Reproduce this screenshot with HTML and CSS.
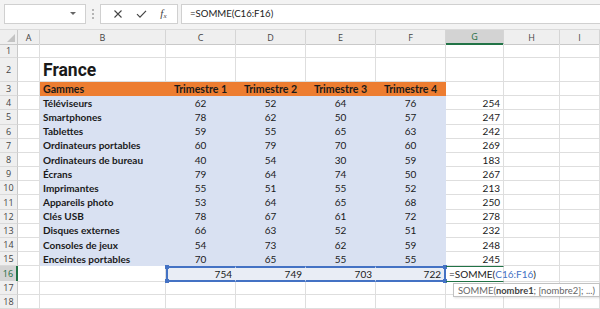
FILE: index.html
```html
<!doctype html>
<html>
<head>
  <meta charset="utf-8">
  <title>France - Trimestres</title>
  <link rel="stylesheet" href="styles.css">
</head>
<body>
  <!-- Formula bar -->
  <div class="toolbar">
    <div class="name-box"><span class="caret"></span></div>
    <div class="grip"><i></i><i></i><i></i></div>
    <div class="fx-box">
      <svg class="ico" width="10" height="10" viewBox="0 0 10 10"><path d="M1.5 1.5l7 7M8.5 1.5l-7 7" stroke="#444" stroke-width="1.1" fill="none"/></svg>
      <svg class="ico" width="11" height="10" viewBox="0 0 11 10"><path d="M1 5.2l3 3L10 1.8" stroke="#444" stroke-width="1.2" fill="none"/></svg>
      <span class="fx">f<sub>x</sub></span>
    </div>
    <div class="formula">=SOMME(C16:F16)</div>
  </div>

  <!-- Sheet -->
  <div class="sheet">
    <div class="row head">
      <div class="corner"><span class="tri"></span></div>
      <div class="col">A</div><div class="col">B</div><div class="col">C</div><div class="col">D</div>
      <div class="col">E</div><div class="col">F</div><div class="col sel">G</div><div class="col">H</div><div class="col">I</div>
    </div>

    <div class="row">
      <div class="rh">1</div>
      <div class="c"></div><div class="c"></div><div class="c"></div><div class="c"></div><div class="c"></div><div class="c"></div><div class="c"></div><div class="c"></div><div class="c"></div>
    </div>

    <div class="row tall">
      <div class="rh">2</div>
      <div class="c"></div><div class="c title">France</div><div class="c"></div><div class="c"></div><div class="c"></div><div class="c"></div><div class="c"></div><div class="c"></div><div class="c"></div>
    </div>

    <div class="row">
      <div class="rh">3</div>
      <div class="c"></div>
      <div class="c or b">Gammes</div>
      <div class="c or b mid">Trimestre 1</div>
      <div class="c or b mid">Trimestre 2</div>
      <div class="c or b mid">Trimestre 3</div>
      <div class="c or b mid">Trimestre 4</div>
      <div class="c"></div><div class="c"></div><div class="c"></div>
    </div>

    <div class="row">
      <div class="rh">4</div><div class="c"></div>
      <div class="c bl b">Téléviseurs</div>
      <div class="c bl mid">62</div><div class="c bl mid">52</div><div class="c bl mid">64</div><div class="c bl mid">76</div>
      <div class="c num">254</div><div class="c"></div><div class="c"></div>
    </div>
    <div class="row">
      <div class="rh">5</div><div class="c"></div>
      <div class="c bl b">Smartphones</div>
      <div class="c bl mid">78</div><div class="c bl mid">62</div><div class="c bl mid">50</div><div class="c bl mid">57</div>
      <div class="c num">247</div><div class="c"></div><div class="c"></div>
    </div>
    <div class="row">
      <div class="rh">6</div><div class="c"></div>
      <div class="c bl b">Tablettes</div>
      <div class="c bl mid">59</div><div class="c bl mid">55</div><div class="c bl mid">65</div><div class="c bl mid">63</div>
      <div class="c num">242</div><div class="c"></div><div class="c"></div>
    </div>
    <div class="row">
      <div class="rh">7</div><div class="c"></div>
      <div class="c bl b">Ordinateurs portables</div>
      <div class="c bl mid">60</div><div class="c bl mid">79</div><div class="c bl mid">70</div><div class="c bl mid">60</div>
      <div class="c num">269</div><div class="c"></div><div class="c"></div>
    </div>
    <div class="row">
      <div class="rh">8</div><div class="c"></div>
      <div class="c bl b">Ordinateurs de bureau</div>
      <div class="c bl mid">40</div><div class="c bl mid">54</div><div class="c bl mid">30</div><div class="c bl mid">59</div>
      <div class="c num">183</div><div class="c"></div><div class="c"></div>
    </div>
    <div class="row">
      <div class="rh">9</div><div class="c"></div>
      <div class="c bl b">Écrans</div>
      <div class="c bl mid">79</div><div class="c bl mid">64</div><div class="c bl mid">74</div><div class="c bl mid">50</div>
      <div class="c num">267</div><div class="c"></div><div class="c"></div>
    </div>
    <div class="row">
      <div class="rh">10</div><div class="c"></div>
      <div class="c bl b">Imprimantes</div>
      <div class="c bl mid">55</div><div class="c bl mid">51</div><div class="c bl mid">55</div><div class="c bl mid">52</div>
      <div class="c num">213</div><div class="c"></div><div class="c"></div>
    </div>
    <div class="row">
      <div class="rh">11</div><div class="c"></div>
      <div class="c bl b">Appareils photo</div>
      <div class="c bl mid">53</div><div class="c bl mid">64</div><div class="c bl mid">65</div><div class="c bl mid">68</div>
      <div class="c num">250</div><div class="c"></div><div class="c"></div>
    </div>
    <div class="row">
      <div class="rh">12</div><div class="c"></div>
      <div class="c bl b">Clés USB</div>
      <div class="c bl mid">78</div><div class="c bl mid">67</div><div class="c bl mid">61</div><div class="c bl mid">72</div>
      <div class="c num">278</div><div class="c"></div><div class="c"></div>
    </div>
    <div class="row">
      <div class="rh">13</div><div class="c"></div>
      <div class="c bl b">Disques externes</div>
      <div class="c bl mid">66</div><div class="c bl mid">63</div><div class="c bl mid">52</div><div class="c bl mid">51</div>
      <div class="c num">232</div><div class="c"></div><div class="c"></div>
    </div>
    <div class="row">
      <div class="rh">14</div><div class="c"></div>
      <div class="c bl b">Consoles de jeux</div>
      <div class="c bl mid">54</div><div class="c bl mid">73</div><div class="c bl mid">62</div><div class="c bl mid">59</div>
      <div class="c num">248</div><div class="c"></div><div class="c"></div>
    </div>
    <div class="row">
      <div class="rh">15</div><div class="c"></div>
      <div class="c bl b">Enceintes portables</div>
      <div class="c bl mid">70</div><div class="c bl mid">65</div><div class="c bl mid">55</div><div class="c bl mid">55</div>
      <div class="c num">245</div><div class="c"></div><div class="c"></div>
    </div>

    <div class="row">
      <div class="rh sel">16</div><div class="c"></div><div class="c"></div>
      <div class="c tot num first">754</div>
      <div class="c tot num">749</div>
      <div class="c tot num">703</div>
      <div class="c tot num last">722</div>
      <div class="c edit">=SOMME(<span class="ref">C16:F16</span>)<span class="cursor"></span>
        <div class="tip">SOMME(<b>nombre1</b>; [nombre2]; ...)</div>
      </div>
      <div class="c"></div><div class="c"></div>
    </div>

    <div class="row">
      <div class="rh">17</div>
      <div class="c"></div><div class="c"></div><div class="c"></div><div class="c"></div><div class="c"></div><div class="c"></div><div class="c"></div><div class="c"></div><div class="c"></div>
    </div>
    <div class="row">
      <div class="rh">18</div>
      <div class="c"></div><div class="c"></div><div class="c"></div><div class="c"></div><div class="c"></div><div class="c"></div><div class="c"></div><div class="c"></div><div class="c"></div>
    </div>
  </div>
</body>
</html>
```

FILE: styles.css
```css
/* ========== Base ========== */
body {
  margin: 0;
  background: #fff;
  font-family: Lato, "Open Sans", sans-serif;
  color: #1a1a1a;
  overflow: hidden;
}

/* ========== Formula bar ========== */
.toolbar {
  display: flex;
  align-items: center;
  height: 30px;
  padding: 0 0 2px 4px;
  box-sizing: border-box;
  background: #f3f3f3;
  border-bottom: 1px solid #dadada;
}

.name-box {
  width: 82px;
  height: 20px;
  box-sizing: border-box;
  background: #fff;
  border: 1px solid #d0d0d0;
  position: relative;
}

.caret {
  position: absolute;
  left: 65px;
  top: 7px;
  border-left: 3px solid transparent;
  border-right: 3px solid transparent;
  border-top: 3px solid #666;
}

.grip {
  width: 14px;
  display: flex;
  flex-direction: column;
  align-items: center;
  gap: 2px;
}

.grip i {
  width: 2px;
  height: 2px;
  background: #b5b5b5;
}

.fx-box {
  width: 78px;
  height: 20px;
  box-sizing: border-box;
  background: #fff;
  border: 1px solid #d0d0d0;
  display: flex;
  align-items: center;
  justify-content: space-around;
  padding: 0 4px 0 6px;
}

.fx {
  font-family: "Liberation Serif", serif;
  font-style: italic;
  font-size: 11px;
  color: #444;
}

.fx sub {
  font-size: 7px;
  vertical-align: -1px;
}

.formula {
  flex: 1;
  height: 20px;
  margin-left: 3px;
  box-sizing: border-box;
  background: #fff;
  border: 1px solid #d0d0d0;
  border-right: none;
  padding-left: 8px;
  font-size: 9.6px;
  line-height: 18px;
  color: #222;
}

/* ========== Sheet ========== */
.sheet {
  font-size: 10px;
}

.row {
  display: grid;
  grid-template-columns: 18px 22px 126px 70px 70px 70px 70px 58px 56px 1fr;
  height: 14.2px;
}

.row.head {
  height: 14px;
}

.row.tall {
  height: 23.8px;
}

.row > div {
  box-sizing: border-box;
  white-space: nowrap;
  display: flex;
  align-items: center;
}

.corner {
  background: #efefef;
  border-right: 1px solid #c9c9c9;
  border-bottom: 1px solid #c9c9c9;
  position: relative;
}

.tri {
  position: absolute;
  right: 2px;
  bottom: 2px;
  border-left: 8px solid transparent;
  border-bottom: 8px solid #c3c3c3;
}

.col {
  justify-content: center;
  background: #efefef;
  color: #444;
  border-right: 1px solid #d5d5d5;
  border-bottom: 1px solid #c9c9c9;
  font-family: "Open Sans", sans-serif;
  font-size: 9px;
}

.col.sel {
  background: #d3d3d3;
  color: #1e6b40;
  border-bottom: 2px solid #217346;
}

.rh {
  justify-content: center;
  background: #efefef;
  color: #444;
  border-right: 1px solid #c9c9c9;
  border-bottom: 1px solid #dadada;
  font-family: "Open Sans", sans-serif;
  font-size: 9px;
}

.rh.sel {
  background: #d3d3d3;
  color: #1e6b40;
  border-right: 2px solid #217346;
}

.c {
  border-right: 1px solid #dedede;
  border-bottom: 1px solid #dedede;
  padding: 0 3px;
}

.title {
  font-family: Roboto, sans-serif;
  font-weight: bold;
  font-size: 17.5px;
  align-items: flex-end !important;
  padding-bottom: 1px;
}

.b { font-weight: bold; }
.mid { justify-content: center; }
.num { justify-content: flex-end; }

.or {
  background: #ed7d31;
  border-color: #ed7d31;
  font-size: 10.6px;
}

.bl {
  background: #d9e1f2;
  border-color: #d9e1f2;
}

/* ========== Total row ========== */
.tot {
  background: #e9edf5;
  border-color: #e9edf5;
  border-top: 2px solid #4472c4;
  border-bottom: 2px solid #4472c4;
  position: relative;
}

.tot.first { border-left: 2px solid #4472c4; }
.tot.last { border-right: 2px solid #4472c4; }

.tot.first::before,
.tot.first::after,
.tot.last::before,
.tot.last::after {
  content: "";
  position: absolute;
  width: 4px;
  height: 4px;
  background: #4472c4;
}

.tot.first::before { left: -3px; top: -3px; }
.tot.first::after { left: -3px; bottom: -3px; }
.tot.last::before { right: -3px; top: -3px; }
.tot.last::after { right: -3px; bottom: -3px; }

.edit {
  position: relative;
  overflow: visible;
  font-size: 10px;
  border-top: 1.5px solid #217346;
  border-bottom: 1.5px solid #217346;
  padding-left: 3px;
  z-index: 2;
}

.ref { color: #4472c4; }

.cursor {
  display: inline-block;
  width: 1px;
  height: 11px;
  background: #222;
  margin-left: 1px;
}

.tip {
  position: absolute;
  left: 7px;
  top: 16px;
  padding: 0 4px;
  height: 14px;
  line-height: 13px;
  box-sizing: border-box;
  background: #fff;
  border: 1px solid #c2c2c2;
  color: #666;
  font-size: 9.4px;
  box-shadow: 1px 1px 2px rgba(0, 0, 0, 0.12);
}

.tip b { color: #444; }
```
